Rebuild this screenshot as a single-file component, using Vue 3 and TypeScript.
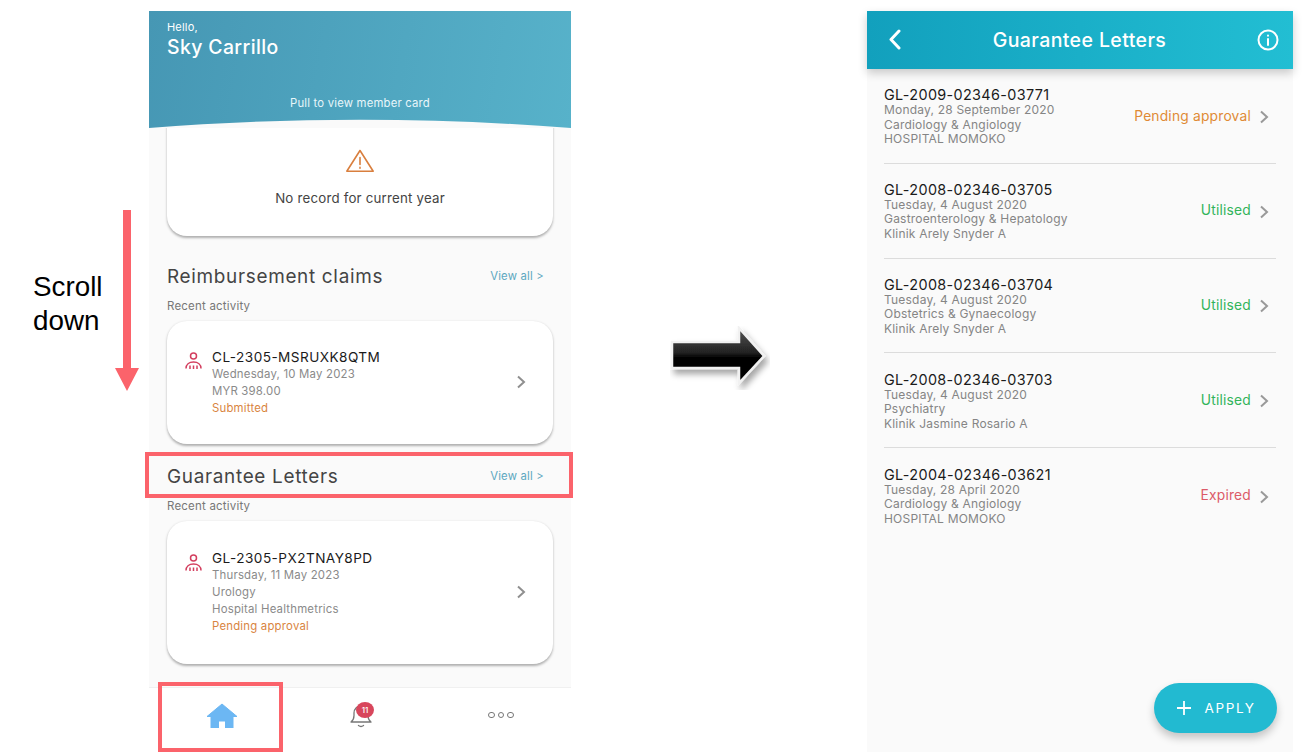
<script setup lang="ts">
interface Letter { code: string; date: string; dept: string; place: string; status: string; kind: string }
const letters: Letter[] = [
  { code: 'GL-2009-02346-03771', date: 'Monday, 28 September 2020', dept: 'Cardiology & Angiology', place: 'HOSPITAL MOMOKO', status: 'Pending approval', kind: 'pending' },
  { code: 'GL-2008-02346-03705', date: 'Tuesday, 4 August 2020', dept: 'Gastroenterology & Hepatology', place: 'Klinik Arely Snyder A', status: 'Utilised', kind: 'utilised' },
  { code: 'GL-2008-02346-03704', date: 'Tuesday, 4 August 2020', dept: 'Obstetrics & Gynaecology', place: 'Klinik Arely Snyder A', status: 'Utilised', kind: 'utilised' },
  { code: 'GL-2008-02346-03703', date: 'Tuesday, 4 August 2020', dept: 'Psychiatry', place: 'Klinik Jasmine Rosario A', status: 'Utilised', kind: 'utilised' },
  { code: 'GL-2004-02346-03621', date: 'Tuesday, 28 April 2020', dept: 'Cardiology & Angiology', place: 'HOSPITAL MOMOKO', status: 'Expired', kind: 'expired' },
]
</script>

<template>
  <div class="stage">
    <div class="notes">
      <p class="scroll-text">Scroll<br />down</p>
      <svg class="down-arrow" width="26" height="184" viewBox="0 0 26 184">
        <path d="M9 0h8v158h8L13 181 1 158h8z" fill="#fb636b" />
      </svg>
    </div>

    <section class="phone home">
      <header class="hero">
        <div class="hello">Hello,</div>
        <div class="name">Sky Carrillo</div>
        <div class="pull">Pull to view member card</div>
        <svg class="curve" width="422" height="9" viewBox="0 0 422 9" preserveAspectRatio="none">
          <path d="M0 9C140 -2 282 -2 422 9V9H0z" fill="#fafafa" />
        </svg>
      </header>

      <div class="scroll">
        <div class="card empty">
          <svg width="30" height="24" viewBox="0 0 30 24" fill="none" stroke="#d97f3e" stroke-width="1.6" stroke-linejoin="round" stroke-linecap="round">
            <path d="M15 1.5 1.8 22.2h26.4z" />
            <path d="M15 8.5v7M15 18.4v.9" />
          </svg>
          <div class="empty-text">No record for current year</div>
        </div>

        <div class="section-head first"><h2>Reimbursement claims</h2><a>View all &gt;</a></div>
        <div class="recent">Recent activity</div>
        <div class="card activity claim">
          <svg class="person" width="17" height="18" viewBox="0 0 17 18" fill="none" stroke="#d33f5f" stroke-width="1.5">
            <circle cx="8.5" cy="4" r="3" />
            <path d="M1 16.5c0-4 3-6.5 7.5-6.5s7.5 2.500 7.500 6.500M5 17v-3.500M8.500 17v-3.500M12 17v-3.500" />
          </svg>
          <div class="activity-body">
            <div class="code">CL-2305-MSRUXK8QTM</div>
            <div>Wednesday, 10 May 2023</div>
            <div>MYR 398.00</div>
            <div class="orange">Submitted</div>
          </div>
          <svg class="chev" width="10" height="14" viewBox="0 0 10 14" fill="none" stroke="#8f8f8f" stroke-width="2"><path d="M2 1.500 8 7l-6 5.500" /></svg>
        </div>

        <div class="section-head second"><h2>Guarantee Letters</h2><a>View all &gt;</a></div>
        <div class="recent">Recent activity</div>
        <div class="card activity gl">
          <svg class="person" width="17" height="18" viewBox="0 0 17 18" fill="none" stroke="#d33f5f" stroke-width="1.5">
            <circle cx="8.5" cy="4" r="3" />
            <path d="M1 16.5c0-4 3-6.5 7.5-6.5s7.5 2.500 7.500 6.500M5 17v-3.500M8.500 17v-3.500M12 17v-3.500" />
          </svg>
          <div class="activity-body">
            <div class="code">GL-2305-PX2TNAY8PD</div>
            <div>Thursday, 11 May 2023</div>
            <div>Urology</div>
            <div>Hospital Healthmetrics</div>
            <div class="orange">Pending approval</div>
          </div>
          <svg class="chev" width="10" height="14" viewBox="0 0 10 14" fill="none" stroke="#8f8f8f" stroke-width="2"><path d="M2 1.500 8 7l-6 5.500" /></svg>
        </div>
      </div>

      <nav class="tabs">
        <div class="tab">
          <svg width="32" height="25" viewBox="0 0 32 25"><path d="M16 1 1 13.500h4V25h7.500v-7h7v7H27V13.500h4z" fill="#6cb7f3" stroke="#6cb7f3" stroke-linejoin="round" /></svg>
        </div>
        <div class="tab">
          <span class="bell">
            <svg width="25" height="26" viewBox="0 0 25 26" fill="none" stroke="#777" stroke-width="1.300" stroke-linejoin="round" stroke-linecap="round">
              <path d="M2 20c2-1.500 3-3.500 3-6.500V11c0-4 3-7 7-7s7 3 7 7v2.500c0 3 1 5 3 6.500z" />
              <path d="M9.500 23.500c1.500 1.200 3.500 1.200 5 0" />
            </svg>
            <b class="badge">11</b>
          </span>
        </div>
        <div class="tab dots"><i></i><i></i><i></i></div>
      </nav>

      <div class="mark mark-title"></div>
      <div class="mark mark-home"></div>
    </section>

    <div class="between">
      <svg width="100" height="64" viewBox="0 0 100 64">
        <defs>
          <linearGradient id="shine" x1="0" y1="0" x2="0" y2="1">
            <stop offset="0" stop-color="#555" />
            <stop offset=".45" stop-color="#222" />
            <stop offset=".55" stop-color="#000" />
            <stop offset="1" stop-color="#000" />
          </linearGradient>
          <filter id="soft" x="-10%" y="-10%" width="125%" height="140%">
            <feDropShadow dx="3" dy="5" stdDeviation="3" flood-color="#000" flood-opacity=".35" />
          </filter>
        </defs>
        <path d="M2 16h67V2l25 28-25 27V42H2z" fill="url(#shine)" stroke="#f1f1f1" stroke-width="2.500" filter="url(#soft)" />
      </svg>
    </div>

    <section class="phone list">
      <header class="bar">
        <svg width="14" height="22" viewBox="0 0 14 22" fill="none" stroke="#fff" stroke-width="3" stroke-linecap="round" stroke-linejoin="round"><path d="M11 2 3 10.500 11 19" /></svg>
        <h1>Guarantee Letters</h1>
        <svg width="22" height="22" viewBox="0 0 22 22" fill="none" stroke="#fff" stroke-width="2" stroke-linecap="round"><circle cx="11" cy="11" r="9.500" /><path d="M11 10v6M11 6.400v.3" /></svg>
      </header>
      <div class="rows">
        <article v-for="item in letters" :key="item.code" class="row">
          <div class="row-text">
            <div class="row-code">{{ item.code }}</div>
            <div>{{ item.date }}</div>
            <div>{{ item.dept }}</div>
            <div>{{ item.place }}</div>
          </div>
          <span class="status" :class="item.kind">{{ item.status }}</span>
          <svg width="10" height="14" viewBox="0 0 10 14" fill="none" stroke="#999" stroke-width="2"><path d="M2 1.500 8 7l-6 5.500" /></svg>
        </article>
      </div>
      <button class="apply" type="button">
        <svg width="16" height="16" viewBox="0 0 16 16" stroke="#fff" stroke-width="1.800"><path d="M8 1v14M1 8h14" /></svg>
        <span>APPLY</span>
      </button>
    </section>
  </div>
</template>

<style>
html, body { margin: 0; background: #fff; }
</style>

<style scoped>
.stage {
  width: 1302px;
  height: 752px;
  box-sizing: border-box;
  padding-top: 11px;
  display: flex;
  overflow: hidden;
  background: #fff;
  font-family: Inter, "Liberation Sans", sans-serif;
  letter-spacing: .2px;
}
.notes { width: 149px; position: relative; flex: none; }
.scroll-text {
  position: absolute;
  left: 33px;
  top: 259px;
  margin: 0;
  font: 27.800px/34px "Liberation Sans", Arial, sans-serif;
  letter-spacing: 0;
  color: #000;
}
.down-arrow { position: absolute; left: 114px; top: 199px; }

.phone { position: relative; flex: none; height: 741px; background: #fafafa; }
.home { width: 422px; display: flex; flex-direction: column; }
.hero {
  position: relative;
  z-index: 1;
  flex: none;
  height: 117px;
  box-sizing: border-box;
  padding: 9px 18px 0;
  color: #fff;
  background: linear-gradient(100deg, #4697b4, #57b2ca);
}
.hello { font-size: 11px; line-height: 14px; }
.name { font-size: 19.400px; line-height: 26px; font-weight: 500; letter-spacing: .4px; }
.pull { position: absolute; left: 0; right: 0; top: 85px; text-align: center; font-size: 11.300px; line-height: 14px; color: #e8f6fa; }
.curve { position: absolute; left: 0; bottom: 0; display: block; }
.scroll { flex: 1; padding: 0 18px; margin-top: -8px; min-height: 0; }
.card {
  background: #fff;
  border-radius: 20px;
  box-shadow: 0 1.500px 2.500px rgba(0, 0, 0, .3);
}
.empty {
  height: 116px;
  box-sizing: border-box;
  padding-top: 29px;
  display: flex;
  flex-direction: column;
  align-items: center;
  border-radius: 0 0 20px 20px;
}
.empty-text { margin-top: 17px; font-size: 13.300px; line-height: 16px; color: #444; }
.section-head { display: flex; justify-content: space-between; align-items: center; padding-right: 9px; height: 24px; }
.section-head.first { margin-top: 28px; }
.section-head.second { margin-top: 20px; }
.section-head h2 { margin: 0; font-size: 18.900px; font-weight: 400; color: #444; letter-spacing: .7px; }
.section-head a { font-size: 11.300px; color: #5da8c0; }
.recent { margin-top: 11px; height: 15px; line-height: 15px; font-size: 11.500px; color: #777; }
.activity { margin-top: 7px; display: flex; align-items: center; padding: 0 27px 0 18px; font-size: 11.400px; line-height: 17px; color: #8a8a8a; }
.claim { height: 123px; }
.gl { height: 143px; }
.person { align-self: flex-start; flex: none; }
.claim .person { margin-top: 31px; }
.gl .person { margin-top: 33px; }
.activity-body { flex: 1; margin-left: 10px; margin-top: -1px; }
.claim .activity-body { margin-top: 0; }
.code { color: #1b1b1b; font-size: 13.600px; line-height: 17px; letter-spacing: .45px; }
.claim .code { line-height: 18px; }
.orange { color: #d9853f; }
.chev { position: relative; top: -1px; }
.tabs { flex: none; height: 65px; display: flex; background: #fff; border-top: 1px solid #f0f0f0; box-sizing: border-box; }
.tab { width: 33.333%; display: flex; align-items: center; justify-content: center; padding-bottom: 10px; }
.tab:first-child { padding-left: 3px; }
.bell { position: relative; display: block; height: 26px; }
.badge {
  position: absolute;
  left: 7px;
  top: 0;
  width: 18px;
  height: 16px;
  border-radius: 50%;
  background: #d8465c;
  color: #fff;
  font-size: 8px;
  font-weight: 500;
  line-height: 16px;
  text-align: center;
  letter-spacing: 0;
}
.dots { gap: 3px; padding-bottom: 10px; }
.dots i { width: 4.500px; height: 4.500px; border: 1.300px solid #777; border-radius: 50%; }
.mark { position: absolute; z-index: 2; box-sizing: border-box; border: 4px solid #fb636b; }
.mark-title { left: -4px; top: 441px; width: 428px; height: 46px; }
.mark-home { left: 9px; top: 671px; width: 125px; height: 70px; }

.between { flex: none; width: 296px; position: relative; }
.between svg { position: absolute; left: 99px; top: 315px; }

.list { width: 426px; }
.bar {
  height: 58px;
  display: flex;
  align-items: center;
  justify-content: space-between;
  padding: 0 14px 0 21px;
  color: #fff;
  background: linear-gradient(90deg, #12a0bd, #22bed3);
  box-shadow: 0 4px 9px rgba(0, 0, 0, .2);
  position: relative;
}
.bar h1 { margin: 0; font-size: 19.500px; font-weight: 500; letter-spacing: .4px; }
.rows { padding: 0 17px; }
.row {
  height: 94.800px;
  box-sizing: border-box;
  padding-right: 7px;
  padding-top: 2px;
  display: flex;
  align-items: center;
  border-bottom: 1px solid #dcdcdc;
  font-size: 12px;
  line-height: 14.500px;
  color: #858585;
}
.row:last-child { border-bottom: 0; }
.row-text { flex: 1; }
.row-code { font-size: 14.400px; line-height: 16px; color: #1b1b1b; letter-spacing: .35px; }
.status { font-size: 13.800px; margin-right: 8px; position: relative; top: -1px; }
.pending { color: #e08a35; }
.utilised { color: #32b45a; }
.expired { color: #dc5a68; }
.apply {
  position: absolute;
  right: 16px;
  bottom: 19px;
  width: 123px;
  height: 50px;
  display: flex;
  align-items: center;
  justify-content: center;
  gap: 13px;
  padding: 0;
  border: 0;
  border-radius: 25px;
  background: #22bad1;
  color: #fff;
  font-family: inherit;
  font-size: 13.500px;
  letter-spacing: 1.600px;
  box-shadow: 0 5px 8px rgba(0, 0, 0, .22);
}
</style>
